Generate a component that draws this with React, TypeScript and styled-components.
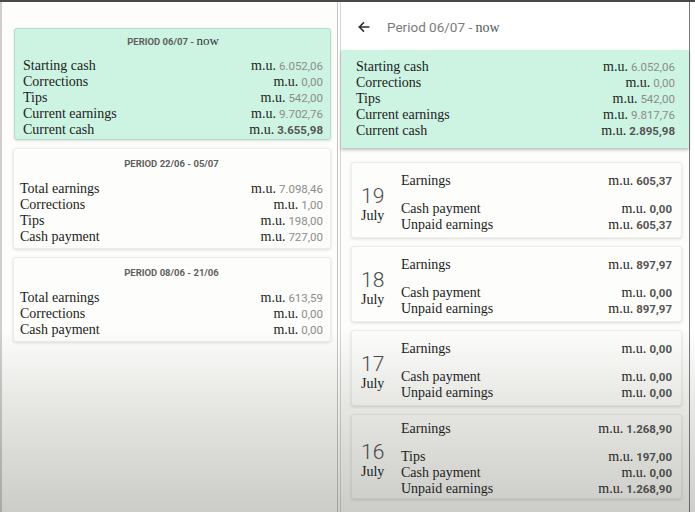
import React from "react";
import styled, { createGlobalStyle } from "styled-components";

const GlobalStyle = createGlobalStyle`
  html, body {
    margin: 0;
    padding: 0;
    background: #ffffff;
  }
  * {
    box-sizing: border-box;
  }
`;

const SERIF = `"Liberation Serif", "Times New Roman", serif`;
const SANS = `Roboto, "Liberation Sans", Arial, sans-serif`;

const Frame = styled.div`
  position: relative;
  width: 695px;
  height: 512px;
  display: flex;
  flex-direction: row;
  align-items: stretch;
  gap: 2px;
  border-top: 2px solid #4a4a4a;
  background: #ffffff;
  overflow: hidden;
`;

const Shade = styled.div`
  position: absolute;
  inset: 0;
  pointer-events: none;
  background: linear-gradient(
    to bottom,
    rgba(40, 40, 30, 0) 0%,
    rgba(40, 40, 30, 0) 64%,
    rgba(40, 40, 30, 0.1) 78%,
    rgba(40, 40, 30, 0.23) 100%
  );
`;

const LeftPanel = styled.div`
  width: 338px;
  flex-shrink: 0;
  display: flex;
  flex-direction: column;
  gap: 8px;
  padding: 26px 6px 0 11px;
  background: #fdfdfb;
  border-left: 2px solid #cfcfcf;
  border-right: 1px solid #c4c4c4;
`;

const RightPanel = styled.div`
  width: 350px;
  flex-shrink: 0;
  display: flex;
  flex-direction: column;
  background: #fdfdfb;
  border-left: 1px solid #d4d4d4;
  border-right: 1px solid #7a7a7a;
`;

const PeriodCard = styled.div<{ $active?: boolean }>`
  flex-shrink: 0;
  display: flex;
  flex-direction: column;
  padding: ${(p) => (p.$active ? "4px 7px 1px 8px" : "7px 7px 3px 6px")};
  margin-left: ${(p) => (p.$active ? "1px" : "0")};
  background: ${(p) => (p.$active ? "#cdf3e3" : "#fdfdfb")};
  border: 1px solid ${(p) => (p.$active ? "#b7dccb" : "#ececea")};
  border-radius: 3px;
  box-shadow: 0 1px 3px rgba(0, 0, 0, 0.12);
`;

const CardTitle = styled.div`
  text-align: center;
  height: 16px;
  line-height: 16px;
  margin-bottom: 9px;
  font-family: ${SANS};
  font-weight: 700;
  font-size: 9.5px;
  color: #5f5f5f;
  white-space: nowrap;
`;

const SerifWord = styled.span<{ $size?: number; $color?: string }>`
  font-family: ${SERIF};
  font-weight: 400;
  font-size: ${(p) => p.$size ?? 13}px;
  color: ${(p) => p.$color ?? "#333"};
`;

const Row = styled.div`
  display: flex;
  flex-direction: row;
  justify-content: space-between;
  align-items: baseline;
  height: 16px;
  line-height: 16px;
  white-space: nowrap;
`;

const Label = styled.span`
  font-family: ${SERIF};
  font-size: 14px;
  color: #1c1c1c;
`;

const Money = styled.span`
  display: inline-flex;
  align-items: baseline;
  gap: 3px;
`;

const Unit = styled.span`
  font-family: ${SERIF};
  font-size: 14px;
  color: #1f1f1f;
`;

const Amount = styled.span<{ $strong?: boolean }>`
  font-family: ${SANS};
  font-size: 11.5px;
  font-weight: ${(p) => (p.$strong ? 700 : 400)};
  color: ${(p) => (p.$strong ? "#555" : "#8c8c8c")};
`;

const Header = styled.div`
  height: 48px;
  flex-shrink: 0;
  display: flex;
  flex-direction: row;
  align-items: center;
  gap: 16px;
  padding: 2px 0 0 16px;
  background: #ffffff;
`;

const HeaderTitle = styled.div`
  font-family: ${SANS};
  font-size: 13.5px;
  color: #7b7b7b;
  white-space: nowrap;
`;

const SummaryBand = styled.div`
  flex-shrink: 0;
  display: flex;
  flex-direction: column;
  padding: 9px 14px 9px 15px;
  background: #cdf3e3;
  box-shadow: 0 2px 3px rgba(0, 0, 0, 0.25);
  position: relative;
  z-index: 1;
`;

const DayList = styled.div`
  display: flex;
  flex-direction: column;
  gap: 8px;
  padding: 14px 7px 0 10px;
`;

const DayCard = styled.div<{ $tall?: boolean }>`
  flex-shrink: 0;
  display: flex;
  flex-direction: row;
  align-items: center;
  padding: ${(p) => (p.$tall ? "6px 9px 1px 9px" : "10px 9px 4px 9px")};
  background: #fdfdfb;
  border: 1px solid #eeeeec;
  border-radius: 3px;
  box-shadow: 0 1px 3px rgba(0, 0, 0, 0.14);
`;

const DateBlock = styled.div`
  width: 40px;
  display: flex;
  flex-direction: column;
  align-items: flex-start;
  padding-top: 4px;
`;

const DayNumber = styled.div`
  font-family: ${SANS};
  font-weight: 300;
  font-size: 21px;
  line-height: 22px;
  color: #4a4a4a;
`;

const Month = styled.div`
  font-family: ${SERIF};
  font-size: 14px;
  line-height: 18px;
  color: #1a1a1a;
`;

const DayRows = styled.div`
  flex: 1;
  display: flex;
  flex-direction: column;
`;

const EarningsRow = styled(Row)`
  margin-bottom: 12px;
`;

type Line = { label: string; value: string; strong?: boolean };

const currentPeriod: Line[] = [
  { label: "Starting cash", value: "6.052,06" },
  { label: "Corrections", value: "0,00" },
  { label: "Tips", value: "542,00" },
  { label: "Current earnings", value: "9.702,76" },
  { label: "Current cash", value: "3.655,98", strong: true },
];

const pastPeriods: { title: string; lines: Line[] }[] = [
  {
    title: "PERIOD 22/06 - 05/07",
    lines: [
      { label: "Total earnings", value: "7.098,46" },
      { label: "Corrections", value: "1,00" },
      { label: "Tips", value: "198,00" },
      { label: "Cash payment", value: "727,00" },
    ],
  },
  {
    title: "PERIOD 08/06 - 21/06",
    lines: [
      { label: "Total earnings", value: "613,59" },
      { label: "Corrections", value: "0,00" },
      { label: "Cash payment", value: "0,00" },
    ],
  },
];

const summary: Line[] = [
  { label: "Starting cash", value: "6.052,06" },
  { label: "Corrections", value: "0,00" },
  { label: "Tips", value: "542,00" },
  { label: "Current earnings", value: "9.817,76" },
  { label: "Current cash", value: "2.895,98", strong: true },
];

const days: { day: string; earnings: string; lines: Line[] }[] = [
  {
    day: "19",
    earnings: "605,37",
    lines: [
      { label: "Cash payment", value: "0,00" },
      { label: "Unpaid earnings", value: "605,37" },
    ],
  },
  {
    day: "18",
    earnings: "897,97",
    lines: [
      { label: "Cash payment", value: "0,00" },
      { label: "Unpaid earnings", value: "897,97" },
    ],
  },
  {
    day: "17",
    earnings: "0,00",
    lines: [
      { label: "Cash payment", value: "0,00" },
      { label: "Unpaid earnings", value: "0,00" },
    ],
  },
  {
    day: "16",
    earnings: "1.268,90",
    lines: [
      { label: "Tips", value: "197,00" },
      { label: "Cash payment", value: "0,00" },
      { label: "Unpaid earnings", value: "1.268,90" },
    ],
  },
];

const MoneyValue = ({ value, strong }: { value: string; strong?: boolean }) => (
  <Money>
    <Unit>m.u.</Unit>
    <Amount $strong={strong}>{value}</Amount>
  </Money>
);

const BackArrow = () => (
  <svg width="14" height="14" viewBox="0 0 24 24" fill="none">
    <path
      d="M20 12H4M11 5l-7 7 7 7"
      stroke="#2b2b2b"
      strokeWidth="2.6"
      strokeLinecap="square"
    />
  </svg>
);

const App = () => {
  return (
    <>
      <GlobalStyle />
      <Frame>
        <LeftPanel>
          <PeriodCard $active>
            <CardTitle>
              PERIOD 06/07 - <SerifWord $size={13}>now</SerifWord>
            </CardTitle>
            {currentPeriod.map((l) => (
              <Row key={l.label}>
                <Label>{l.label}</Label>
                <MoneyValue value={l.value} strong={l.strong} />
              </Row>
            ))}
          </PeriodCard>
          {pastPeriods.map((p) => (
            <PeriodCard key={p.title}>
              <CardTitle>{p.title}</CardTitle>
              {p.lines.map((l) => (
                <Row key={l.label}>
                  <Label>{l.label}</Label>
                  <MoneyValue value={l.value} />
                </Row>
              ))}
            </PeriodCard>
          ))}
        </LeftPanel>

        <RightPanel>
          <Header>
            <BackArrow />
            <HeaderTitle>
              Period 06/07 - <SerifWord $size={14} $color="#555">now</SerifWord>
            </HeaderTitle>
          </Header>
          <SummaryBand>
            {summary.map((l) => (
              <Row key={l.label}>
                <Label>{l.label}</Label>
                <MoneyValue value={l.value} strong={l.strong} />
              </Row>
            ))}
          </SummaryBand>
          <DayList>
            {days.map((d) => (
              <DayCard key={d.day} $tall={d.lines.length > 2}>
                <DateBlock>
                  <DayNumber>{d.day}</DayNumber>
                  <Month>July</Month>
                </DateBlock>
                <DayRows>
                  <EarningsRow>
                    <Label>Earnings</Label>
                    <MoneyValue value={d.earnings} strong />
                  </EarningsRow>
                  {d.lines.map((l) => (
                    <Row key={l.label}>
                      <Label>{l.label}</Label>
                      <MoneyValue value={l.value} strong />
                    </Row>
                  ))}
                </DayRows>
              </DayCard>
            ))}
          </DayList>
        </RightPanel>
        <Shade />
      </Frame>
    </>
  );
};

export default App;
